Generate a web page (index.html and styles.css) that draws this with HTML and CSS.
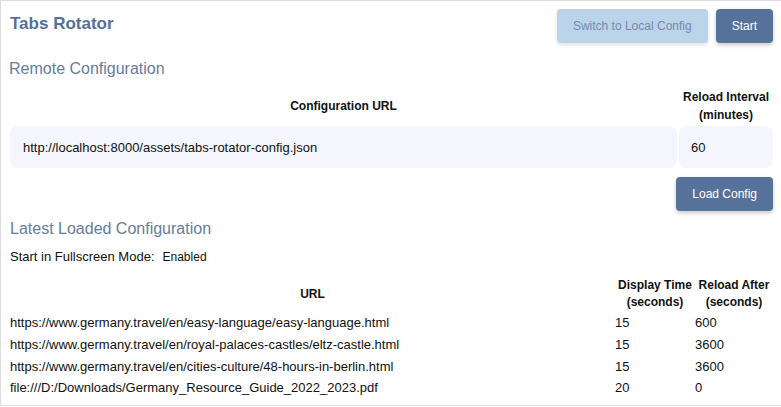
FILE: index.html
```html
<!DOCTYPE html>
<html lang="en">
<head>
<meta charset="utf-8">
<title>Tabs Rotator</title>
<link rel="stylesheet" href="styles.css">
</head>
<body>
<div class="app">
  <header class="topbar">
    <h1 class="title">Tabs Rotator</h1>
    <div class="actions">
      <button class="btn btn-light">Switch to Local Config</button>
      <button class="btn btn-primary">Start</button>
    </div>
  </header>

  <h2 class="section-title section-remote">Remote Configuration</h2>
  <table class="config-table">
    <thead>
      <tr>
        <th class="col-url">Configuration URL</th>
        <th class="col-interval">Reload Interval<br>(minutes)</th>
      </tr>
    </thead>
    <tbody>
      <tr>
        <td><input class="field" type="text" value="http://localhost:8000/assets/tabs-rotator-config.json"></td>
        <td><input class="field field-small" type="text" value="60"></td>
      </tr>
    </tbody>
  </table>
  <div class="load-row">
    <button class="btn btn-primary">Load Config</button>
  </div>

  <h2 class="section-title section-latest">Latest Loaded Configuration</h2>
  <div class="fullscreen">Start in Fullscreen Mode:<span class="fullscreen-value">Enabled</span></div>

  <table class="urls-table">
    <thead>
      <tr>
        <th class="u-url">URL</th>
        <th class="u-display">Display Time<br>(seconds)</th>
        <th class="u-reload">Reload After<br>(seconds)</th>
      </tr>
    </thead>
    <tbody>
      <tr><td>https://www.germany.travel/en/easy-language/easy-language.html</td><td>15</td><td>600</td></tr>
      <tr><td>https://www.germany.travel/en/royal-palaces-castles/eltz-castle.html</td><td>15</td><td>3600</td></tr>
      <tr><td>https://www.germany.travel/en/cities-culture/48-hours-in-berlin.html</td><td>15</td><td>3600</td></tr>
      <tr><td>file:///D:/Downloads/Germany_Resource_Guide_2022_2023.pdf</td><td>20</td><td>0</td></tr>
    </tbody>
  </table>
</div>
</body>
</html>
```

FILE: styles.css
```css
* { box-sizing: border-box; }

html, body {
  margin: 0;
  padding: 0;
  background: #ffffff;
}

body {
  font-family: "Liberation Sans", Arial, sans-serif;
  color: #111111;
  font-size: 13px;
}

.app {
  border: 1px solid #dddddd;
  border-right: none;
  height: 406px;
  padding: 8px 8px 8px 9px;
}

.topbar {
  display: flex;
  justify-content: space-between;
  align-items: flex-start;
}

.title {
  margin: 5px 0 0 0;
  font-size: 17px;
  line-height: 20px;
  font-weight: bold;
  color: #55709a;
}

.actions {
  display: flex;
  gap: 8px;
}

.btn {
  font-family: "Liberation Sans", Arial, sans-serif;
  font-size: 12px;
  height: 34px;
  padding: 0 16px;
  border: none;
  border-radius: 4px;
  cursor: pointer;
}

.btn-primary {
  background: #57729a;
  color: #ffffff;
  box-shadow: 0 2px 4px rgba(0, 0, 0, 0.22);
}

.btn-light {
  background: #bcd4ea;
  color: #7589aa;
  box-shadow: 0 2px 4px rgba(0, 0, 0, 0.12);
}

.section-title {
  font-size: 16px;
  line-height: 18px;
  font-weight: normal;
  color: #687c9b;
  margin: 0;
}

.section-remote {
  margin-top: 17px;
  margin-left: -1px;
}

.config-table {
  width: calc(100% + 4px);
  margin: 8px -2px 0 -2px;
  border-spacing: 2px;
}

.config-table th {
  font-size: 12px;
  line-height: 18px;
  font-weight: bold;
  padding: 0;
  text-align: center;
}

.config-table .col-interval {
  width: 94px;
}

.config-table td {
  padding: 0;
}

.field {
  display: block;
  width: 100%;
  height: 42px;
  border: none;
  outline: none;
  border-radius: 8px;
  background: #f5f6fd;
  font-family: "Liberation Sans", Arial, sans-serif;
  font-size: 13px;
  color: #111111;
  padding: 0 13px;
}

.field-small {
  padding: 0 12px;
}

.load-row {
  display: flex;
  justify-content: flex-end;
  margin-top: 7px;
}

.section-latest {
  margin-top: 9px;
}

.fullscreen {
  margin-top: 11px;
  font-size: 13px;
  line-height: 16px;
}

.fullscreen-value {
  font-size: 12px;
  margin-left: 8px;
}

.urls-table {
  width: 100%;
  margin-top: 11px;
  border-collapse: collapse;
}

.urls-table th {
  font-size: 12px;
  line-height: 17px;
  font-weight: bold;
  padding: 1px 0;
  text-align: center;
}

.urls-table .u-display { width: 80px; }
.urls-table .u-reload { width: 78px; }

.urls-table td {
  font-size: 13px;
  line-height: 17.8px;
  padding: 2px 0;
  text-align: left;
}
```
